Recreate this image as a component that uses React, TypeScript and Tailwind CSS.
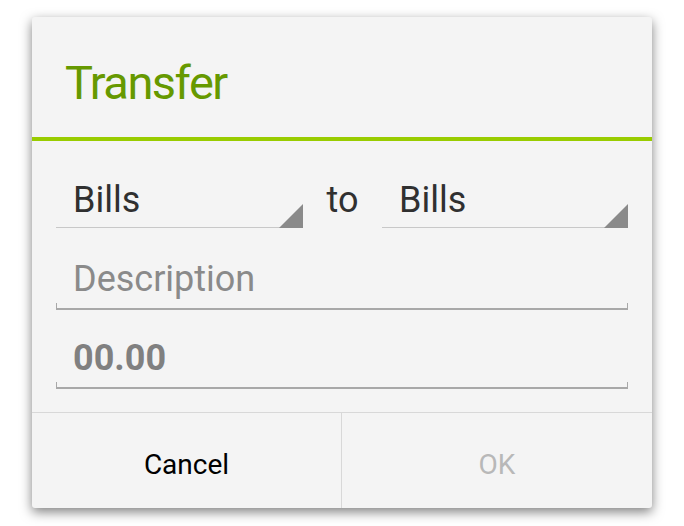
import React from "react";

const font = { fontFamily: "Roboto, 'Noto Sans', sans-serif" };

function Spinner({ value, className = "" }: { value: string; className?: string }) {
  return (
    <div className={`relative border-b border-[#c8c8c8] pb-[9px] ${className}`}>
      <div className="pl-[17px] text-[36px] leading-[36px] text-[#303030]">{value}</div>
      <svg className="absolute right-0 bottom-[-1px]" width="24" height="24" viewBox="0 0 24 24">
        <polygon points="24,0 24,24 0,24" fill="#8a8a8a" />
      </svg>
    </div>
  );
}

function EditField({ children, className = "" }: { children: React.ReactNode; className?: string }) {
  return (
    <div className={className}>
      <div className="pl-[17px] text-[36px] leading-[36px]">{children}</div>
      <div className="mt-[6px] h-[7px] border-x border-b-2 border-[#a8a8a8]" />
    </div>
  );
}

export default function App() {
  return (
    <div className="w-[684px] h-[526px] bg-white pt-[17px] pl-[32px]" style={font}>
      <div className="w-[620px] h-[491px] bg-[#f4f4f4] rounded-[3px] shadow-[0_4px_12px_rgba(0,0,0,0.5)] flex flex-col overflow-hidden">
        <div className="h-[120px] pt-[42px] pl-[33px]">
          <div className="text-[47px] leading-[47px] tracking-[-1.5px] text-[#669900]">Transfer</div>
        </div>
        <div className="h-[4px] bg-[#99cc00]" />

        <div className="flex-1 px-[24px] pt-[41px]">
          <div className="flex items-end">
            <Spinner value="Bills" className="w-[247px]" />
            <div className="w-[79px] pb-[10px] text-center text-[36px] leading-[36px] text-[#303030]">to</div>
            <Spinner value="Bills" className="flex-1" />
          </div>

          <EditField className="mt-[33px]">
            <span className="text-[#8a8a8a]">Description</span>
          </EditField>

          <EditField className="mt-[30px]">
            <span className="font-bold text-[#808080]">00.00</span>
          </EditField>
        </div>

        <div className="h-[96px] flex border-t border-[#d8d8d8]">
          <div className="w-[310px] flex items-center justify-center pt-[8px] text-[28px] leading-[28px] text-black border-r border-[#d8d8d8]">
            Cancel
          </div>
          <div className="flex-1 flex items-center justify-center pt-[8px] text-[28px] leading-[28px] text-[#b8b8b8]">
            OK
          </div>
        </div>
      </div>
    </div>
  );
}
